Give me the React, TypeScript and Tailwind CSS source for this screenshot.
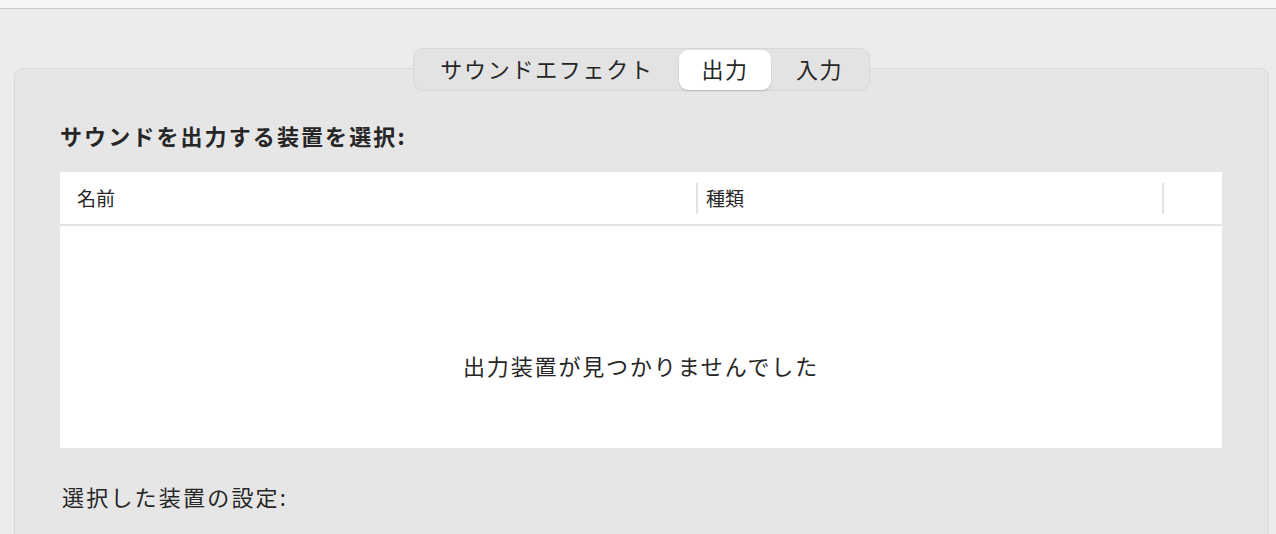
import React from "react";

const font = "font-['Hiragino_Sans','Noto_Sans_CJK_JP',sans-serif]";

export default function App() {
  return (
    <div className={`w-[1276px] h-[534px] overflow-hidden bg-[#ececec] text-[#262626] ${font}`}>
      <div className="h-[9px] bg-[#f5f5f5] border-b border-[#cdcdcd]" />
      <div className="ml-[14px] w-[1255px] flex justify-center pt-[39px]">
        <div className="relative z-10 flex h-[43px] items-center rounded-[10px] border border-[#d7d7d7] bg-[#e3e3e3] px-[1px]">
          <div className="flex h-[40px] w-[264px] items-center justify-center pb-[3px] text-[22px] tracking-[1.7px]">
            サウンドエフェクト
          </div>
          <div className="flex h-[40px] w-[92px] items-center justify-center pb-[3px] rounded-[9px] bg-white text-[22px] tracking-[1.5px] shadow-[0_1px_2px_rgba(0,0,0,0.18)]">
            出力
          </div>
          <div className="flex h-[40px] w-[97px] items-center justify-center pb-[3px] text-[22px] tracking-[1.5px]">
            入力
          </div>
        </div>
      </div>
      <div className="ml-[14px] -mt-[23px] w-[1255px] h-[480px] rounded-t-[9px] border border-[#d9d9d9] bg-[#e6e6e6] pl-[45px] pr-[46px] pt-[52px]">
        <div className="h-[28px] flex items-center text-[22px] font-bold tracking-[2.1px]">
          サウンドを出力する装置を選択:
        </div>
        <div className="mt-[23px] bg-white h-[276px] flex flex-col">
          <div className="h-[54px] flex items-center border-b-2 border-[#e3e3e3] text-[19px]">
            <div className="w-[636px] pl-[17px]">名前</div>
            <div className="w-[2px] h-[31px] bg-[#e2e2e2]" />
            <div className="w-[464px] pl-[8px]">種類</div>
            <div className="w-[2px] h-[31px] bg-[#e2e2e2]" />
          </div>
          <div className="flex justify-center pt-[123px] text-[22px] tracking-[1.85px]">
            出力装置が見つかりませんでした
          </div>
        </div>
        <div className="mt-[34px] pl-[2px] h-[28px] flex items-center text-[22px] tracking-[2.2px]">
          選択した装置の設定:
        </div>
      </div>
    </div>
  );
}
